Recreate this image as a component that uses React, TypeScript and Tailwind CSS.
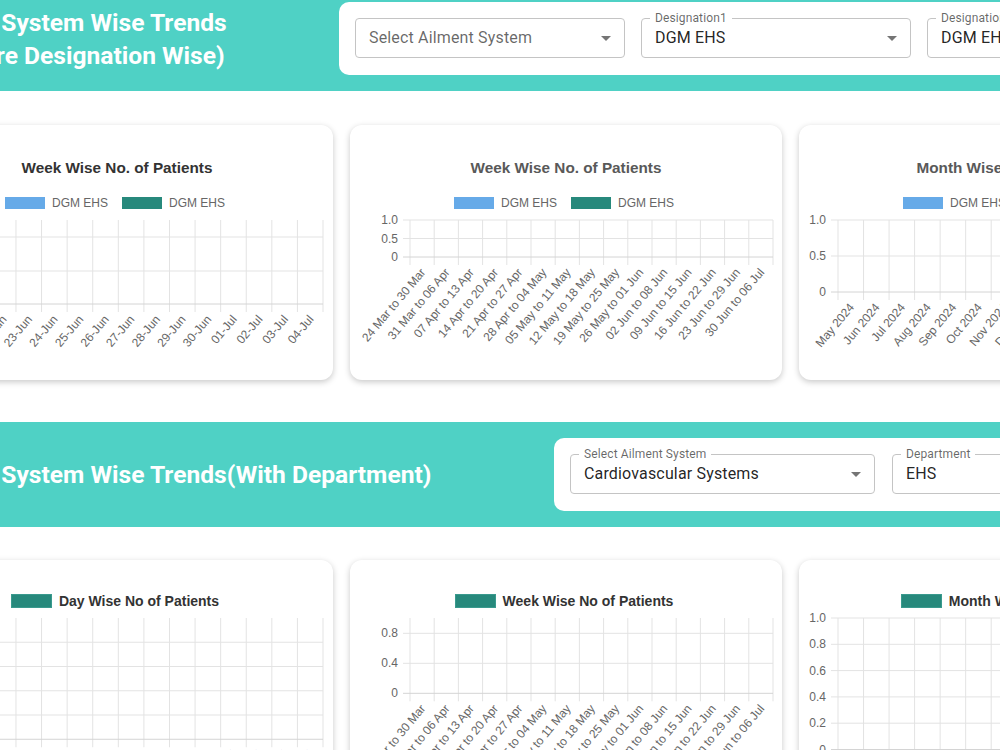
import React from "react";

const ROBOTO = { fontFamily: "Roboto, 'Liberation Sans', Arial, sans-serif" };
const ARIAL = { fontFamily: "'Liberation Sans', Arial, Helvetica, sans-serif" };

function Arrow() {
  return (
    <svg className="absolute right-[7px] top-[8px] w-6 h-6" viewBox="0 0 24 24">
      <path d="M7 10l5 5 5-5z" fill="rgba(0,0,0,0.54)" />
    </svg>
  );
}

function MuiSelect({
  label,
  value,
  placeholder,
  w,
}: {
  label?: string;
  value?: string;
  placeholder?: string;
  w: string;
}) {
  return (
    <div className={`relative h-[40px] shrink-0 ${w}`} style={ROBOTO}>
      <div className="absolute inset-0 border border-[#c4c4c4] rounded-[4px]" />
      {label && (
        <div className="absolute left-[9px] top-[-7px] px-[5px] bg-white text-[12px] leading-[14px] text-[rgba(0,0,0,0.6)] tracking-[0.01em] whitespace-nowrap">
          {label}
        </div>
      )}
      <div
        className={`absolute left-[14px] top-0 h-full flex items-center text-[16px] tracking-[0.01em] whitespace-nowrap ${
          value ? "text-[rgba(0,0,0,0.87)]" : "text-[rgba(0,0,0,0.6)]"
        }`}
      >
        {value ?? placeholder}
      </div>
      <Arrow />
    </div>
  );
}

type HLine = { y: number; label?: string; axis?: boolean };

function Plot({
  left,
  right,
  axisY,
  hLines,
  labels,
  height,
}: {
  left: number;
  right: number;
  axisY: number;
  hLines: HLine[];
  labels: string[];
  height: number;
}) {
  const n = labels.length;
  const cw = (right - left) / n;
  return (
    <svg width={432} height={height} className="block overflow-visible shrink-0" style={ARIAL}>
      {Array.from({ length: n + 1 }).map((_, i) => {
        const x = left + i * cw;
        return <line key={`v${i}`} x1={x} x2={x} y1={0} y2={axisY + 8} stroke="#e3e3e3" strokeWidth={1} />;
      })}
      {hLines.map((h, i) => (
        <line
          key={`h${i}`}
          x1={left - 7}
          x2={right}
          y1={h.y}
          y2={h.y}
          stroke={h.axis ? "#d4d4d4" : "#e3e3e3"}
          strokeWidth={1}
        />
      ))}
      {hLines.map((h, i) =>
        h.label ? (
          <text
            key={`yl${i}`}
            x={left - 12}
            y={h.y}
            textAnchor="end"
            dominantBaseline="central"
            fontSize={12}
            fill="#666"
          >
            {h.label}
          </text>
        ) : null
      )}
      {labels.map((l, i) => {
        const cx = left + (i + 0.5) * cw + 1;
        const cy = axisY + 13;
        return (
          <text
            key={`xl${i}`}
            x={cx}
            y={cy}
            textAnchor="end"
            dominantBaseline="central"
            transform={`rotate(-50 ${cx} ${cy})`}
            fontSize={12}
            fill="#666"
          >
            {l}
          </text>
        );
      })}
    </svg>
  );
}

const DAYS = [
  "20-Jun", "21-Jun", "22-Jun", "23-Jun", "24-Jun", "25-Jun", "26-Jun", "27-Jun",
  "28-Jun", "29-Jun", "30-Jun", "01-Jul", "02-Jul", "03-Jul", "04-Jul",
];
const WEEKS = [
  "24 Mar to 30 Mar", "31 Mar to 06 Apr", "07 Apr to 13 Apr", "14 Apr to 20 Apr",
  "21 Apr to 27 Apr", "28 Apr to 04 May", "05 May to 11 May", "12 May to 18 May",
  "19 May to 25 May", "26 May to 01 Jun", "02 Jun to 08 Jun", "09 Jun to 15 Jun",
  "16 Jun to 22 Jun", "23 Jun to 29 Jun", "30 Jun to 06 Jul",
];
const MONTHS = [
  "May 2024", "Jun 2024", "Jul 2024", "Aug 2024", "Sep 2024", "Oct 2024", "Nov 2024",
  "Dec 2024", "Jan 2025", "Feb 2025", "Mar 2025", "Apr 2025", "May 2025", "Jun 2025", "Jul 2025",
];

const CARD = "w-[432px] h-[255px] shrink-0 bg-white rounded-[12px] shadow-[0_2px_6px_rgba(0,0,0,0.22)] flex flex-col overflow-hidden";

function LegendTwo() {
  return (
    <div className="mt-[20px] h-[12px] flex justify-center items-center gap-[14px] pr-[4px]" style={ARIAL}>
      <div className="flex items-center gap-[7px]">
        <div className="w-[40px] h-[12px] bg-[#66aae8]" />
        <span className="text-[12px] leading-[12px] text-[#666]">DGM EHS</span>
      </div>
      <div className="flex items-center gap-[7px]">
        <div className="w-[40px] h-[12px] bg-[#27897c]" />
        <span className="text-[12px] leading-[12px] text-[#666]">DGM EHS</span>
      </div>
    </div>
  );
}

function TopCard({ title, dark, children }: { title: string; dark?: boolean; children: React.ReactNode }) {
  return (
    <div className={CARD}>
      <div
        className={`pt-[34px] h-[52px] text-center text-[15.3px] leading-[18px] font-bold ${dark ? "text-[#333]" : "text-[#595959]"}`}
        style={ARIAL}
      >
        {title}
      </div>
      <LegendTwo />
      <div className="mt-[11px]">{children}</div>
    </div>
  );
}

function BottomCard({ title, children }: { title: string; children: React.ReactNode }) {
  return (
    <div className={CARD}>
      <div className="pt-[34px] h-[48px] flex justify-center items-center gap-[7px] pr-[4px]" style={ARIAL}>
        <div className="w-[41px] h-[14px] bg-[#27897c] border border-[#3a9a8e]" />
        <span className="text-[14px] leading-[14px] font-bold text-[#333]">{title}</span>
      </div>
      <div className="mt-[10px]">{children}</div>
    </div>
  );
}

export default function App() {
  const c1Lines2 = [24.25, 48.5, 72.75, 97, 121.25];
  return (
    <div className="w-[1000px] h-[750px] overflow-hidden bg-white relative">
      <div className="ml-[-99px] mt-[-14px] w-[1330px]">
        {/* Band 1 */}
        <div className="h-[105px] pl-4 pr-[18px] flex items-center justify-between bg-[#4fd1c5]">
          <div className="ml-[-8px] w-[410px] shrink-0 text-white font-bold text-[24.6px] leading-[33px]" style={ROBOTO}>
            Ailment System Wise Trends (Compare Designation Wise)
          </div>
          <div className="bg-white rounded-[10px] px-4 pt-4 pb-[17px] flex gap-4 shrink-0">
            <MuiSelect w="w-[270px]" placeholder="Select Ailment System" />
            <MuiSelect w="w-[270px]" label="Designation1" value="DGM EHS" />
            <MuiSelect w="w-[270px]" label="Designation2" value="DGM EHS" />
          </div>
        </div>

        {/* Row 1 */}
        <div className="mt-[34px] flex gap-[17px]">
          <TopCard title="Week Wise No. of Patients" dark>
            <Plot
              left={38.2}
              right={422}
              axisY={84}
              height={150}
              labels={DAYS}
              hLines={[
                { y: 17, label: "1.0" },
                { y: 51, label: "0.5" },
                { y: 84, label: "0", axis: true },
              ]}
            />
          </TopCard>
          <TopCard title="Week Wise No. of Patients">
            <Plot
              left={60}
              right={423}
              axisY={37}
              height={150}
              labels={WEEKS}
              hLines={[
                { y: 0, label: "1.0" },
                { y: 18.5, label: "0.5" },
                { y: 37, label: "0", axis: true },
              ]}
            />
          </TopCard>
          <TopCard title="Month Wise No. of Patients">
            <Plot
              left={39}
              right={422}
              axisY={72}
              height={150}
              labels={MONTHS}
              hLines={[
                { y: 0, label: "1.0" },
                { y: 36, label: "0.5" },
                { y: 72, label: "0", axis: true },
              ]}
            />
          </TopCard>
        </div>

        {/* Band 2 */}
        <div className="mt-[42px] h-[105px] pl-4 pr-[18px] flex items-center justify-between bg-[#4fd1c5]">
          <div className="ml-[-8px] shrink-0 text-white font-bold text-[24.6px] leading-[33px] whitespace-nowrap" style={ROBOTO}>
            Ailment System Wise Trends(With Department)
          </div>
          <div className="bg-white rounded-[10px] px-4 pt-4 pb-[17px] flex gap-[17px] shrink-0">
            <MuiSelect w="w-[305px]" label="Select Ailment System" value="Cardiovascular Systems" />
            <MuiSelect w="w-[305px]" label="Department" value="EHS" />
          </div>
        </div>

        {/* Row 2 */}
        <div className="mt-[33px] flex gap-[17px]">
          <BottomCard title="Day Wise No of Patients">
            <Plot
              left={38.2}
              right={422}
              axisY={121.25}
              height={190}
              labels={DAYS}
              hLines={c1Lines2.map((y, i) => ({
                y,
                label: ["0.8", "0.6", "0.4", "0.2", "0"][i],
                axis: i === 4,
              }))}
            />
          </BottomCard>
          <BottomCard title="Week Wise No of Patients">
            <Plot
              left={60}
              right={423}
              axisY={75.3}
              height={190}
              labels={WEEKS}
              hLines={[
                { y: 15.3, label: "0.8" },
                { y: 45.3, label: "0.4" },
                { y: 75.3, label: "0", axis: true },
              ]}
            />
          </BottomCard>
          <BottomCard title="Month Wise No of Patients">
            <Plot
              left={39}
              right={422}
              axisY={131.5}
              height={190}
              labels={MONTHS}
              hLines={[
                { y: 0, label: "1.0" },
                { y: 26.3, label: "0.8" },
                { y: 52.6, label: "0.6" },
                { y: 78.9, label: "0.4" },
                { y: 105.2, label: "0.2" },
                { y: 131.5, label: "0", axis: true },
              ]}
            />
          </BottomCard>
        </div>
      </div>
    </div>
  );
}
